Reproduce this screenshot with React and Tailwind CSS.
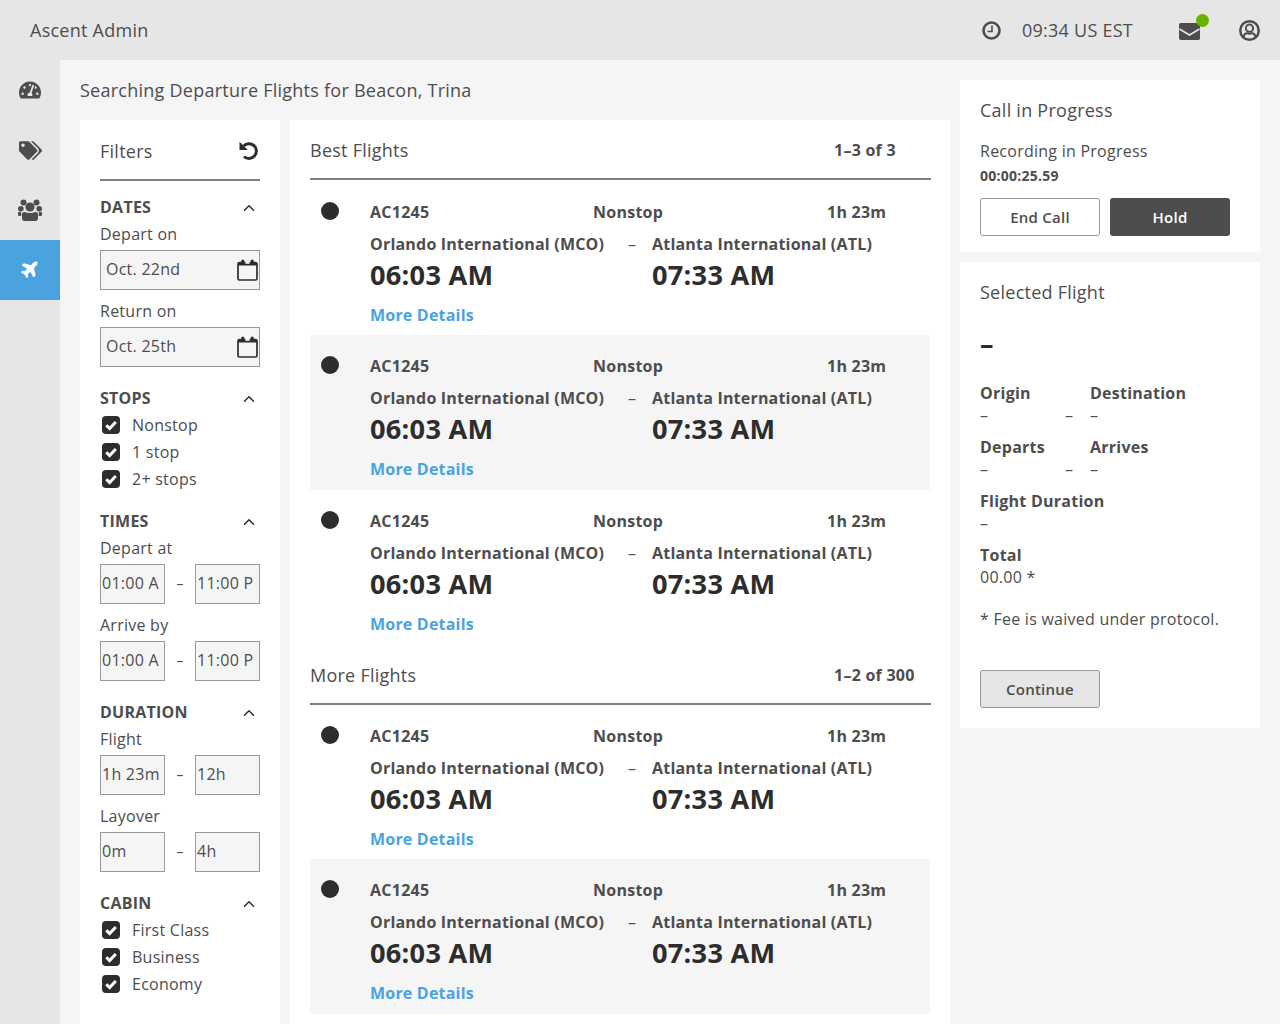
import React from "react";
import { FaTachometerAlt, FaTags, FaPlane } from "react-icons/fa";
import { FiChevronUp } from "react-icons/fi";

function SectionHead({ children }) {
  return (
    <div className="flex h-[27px] items-center justify-between">
      <span className="text-base font-bold">{children}</span>
      <FiChevronUp className="mr-[2px] mt-[2px] text-[18px] text-[#2d2d2d]" />
    </div>
  );
}
function Label({ children }) {
  return <div className="flex h-[27px] items-center text-base">{children}</div>;
}
function Box({ children, className = "" }) {
  return (
    <div className={`flex h-10 items-center overflow-hidden border border-[#999999] bg-[#f5f5f5] pb-[2px] text-base ${className}`}>
      {children}
    </div>
  );
}
function CalendarIcon() {
  return (
    <svg width="21" height="22" viewBox="0 0 21 22" className="mt-[1px] text-[#2d2d2d]">
      <rect x="1" y="3.5" width="19" height="17.5" rx="1.5" fill="none" stroke="currentColor" strokeWidth="1.7" />
      <rect x="1" y="3.5" width="19" height="3" fill="currentColor" />
      <rect x="4.2" y="0.5" width="3.2" height="5.5" rx="1.6" fill="currentColor" />
      <rect x="13.6" y="0.5" width="3.2" height="5.5" rx="1.6" fill="currentColor" />
      <rect x="8.4" y="2" width="4.2" height="2.8" fill="#f5f5f5" />
    </svg>
  );
}
function DateInput({ value }) {
  return (
    <Box className="mt-[3px] justify-between pl-[5px] pr-[1.5px]">
      <span>{value}</span>
      <CalendarIcon />
    </Box>
  );
}
function RangeInput({ a, b }) {
  return (
    <div className="mt-[3px] flex items-center">
      <Box className="w-[65px] whitespace-nowrap pl-[1px]">{a}</Box>
      <span className="w-[30px] text-center text-sm">–</span>
      <Box className="w-[65px] whitespace-nowrap pl-[1px]">{b}</Box>
    </div>
  );
}
function Check({ children }) {
  return (
    <div className="flex h-[27px] items-center text-base">
      <svg width="18" height="18" viewBox="0 0 18 18" className="ml-[2px] mr-[12px]">
        <rect width="18" height="18" rx="4" fill="#2d2d2d" />
        <path d="M4.3 9.2 L7.6 12.5 L13.8 6" fill="none" stroke="#fff" strokeWidth="3" />
      </svg>
      {children}
    </div>
  );
}
function FlightRow({ shaded, first }) {
  return (
    <div className={`flex pt-[17px] ${first ? "h-[154px]" : "h-[155px]"} ${shaded ? "bg-[#f5f5f5]" : ""}`}>
      <div className="w-[60px] pl-[11px] pt-[4px]">
        <div className="h-[18px] w-[18px] rounded-full bg-[#2d2d2d]" />
      </div>
      <div className="flex-1">
        <div className="flex h-[27px] items-center text-base font-bold">
          <span className="w-[223px]">AC1245</span>
          <span className="w-[234px]">Nonstop</span>
          <span>1h 23m</span>
        </div>
        <div className="mt-[5px] flex h-[27px] items-center text-base font-bold tracking-[0.2px]">
          <span className="w-[258px]">Orlando International (MCO)</span>
          <span className="w-[24px] font-normal">–</span>
          <span>Atlanta International (ATL)</span>
        </div>
        <div className="flex h-[36px] items-center text-[27.2px] font-bold text-[#2d2d2d]">
          <span className="w-[282px]">06:03 AM</span>
          <span>07:33 AM</span>
        </div>
        <div className="mt-[8px] flex h-[27px] items-center text-base font-bold tracking-[0.2px] text-[#4aa3df]">More Details</div>
      </div>
    </div>
  );
}
function ListHead({ title, count, className = "" }) {
  return (
    <div className={`-mx-[0.5px] flex h-[60px] items-center justify-between border-b-2 border-[#808080] pl-[0.5px] pt-[2px] ${className}`}>
      <span className="text-lg">{title}</span>
      <span className="w-[96.5px] text-base font-bold">{count}</span>
    </div>
  );
}
function Pair({ a, b, av = "–", bv = "–" }) {
  return (
    <div className="mt-[10px]">
      <div className="flex h-[22px] items-center text-base font-bold">
        <span className="w-[110px]">{a}</span>
        <span>{b}</span>
      </div>
      <div className="flex h-[22px] items-center text-base">
        <span className="w-[85px]">{av}</span>
        <span className="w-[25px]">–</span>
        <span>{bv}</span>
      </div>
    </div>
  );
}
function Single({ a, v }) {
  return (
    <div className="mt-[10px]">
      <div className="flex h-[22px] items-center text-base font-bold">{a}</div>
      <div className="flex h-[22px] items-center text-base">{v}</div>
    </div>
  );
}
function UsersIcon() {
  return (
    <svg width="24" height="22" viewBox="0 0 24 22" fill="currentColor">
      <circle cx="5.5" cy="3.5" r="3" />
      <circle cx="18.5" cy="3.5" r="3" />
      <circle cx="2.8" cy="9.8" r="2.8" />
      <circle cx="21.2" cy="9.8" r="2.8" />
      <circle cx="12" cy="8" r="4.6" />
      <path d="M4 15 C4 13.5 5.5 13 7 13 C9 14.3 15 14.3 17 13 C18.5 13 20 13.5 20 15 L20 19.5 C20 21 19 22 17.5 22 L6.5 22 C5 22 4 21 4 19.5 Z" />
      <path d="M0 13.5 C1 12.8 2.5 13 3.2 13.5 L3.2 17 L1.5 17 C0.6 17 0 16.5 0 15.5 Z" />
      <path d="M24 13.5 C23 12.8 21.5 13 20.8 13.5 L20.8 17 L22.5 17 C23.4 17 24 16.5 24 15.5 Z" />
    </svg>
  );
}
function ClockIcon() {
  return (
    <svg width="19" height="19" viewBox="0 0 19 19" fill="none" stroke="currentColor">
      <circle cx="9.5" cy="9.5" r="8" strokeWidth="2.6" />
      <path d="M10 4.5 V10.5 H5.5" strokeWidth="1.6" />
    </svg>
  );
}
function MailIcon() {
  return (
    <svg width="21" height="17" viewBox="0 0 21 17">
      <rect width="21" height="17" rx="1.8" fill="currentColor" />
      <path d="M0.5 6 L10.5 12 L20.5 6" fill="none" stroke="#e6e6e6" strokeWidth="1.6" />
    </svg>
  );
}
function UserIcon() {
  return (
    <svg width="21" height="21" viewBox="0 0 21 21" fill="none" stroke="currentColor">
      <circle cx="10.5" cy="10.5" r="9.25" strokeWidth="2.5" />
      <circle cx="10.5" cy="8.2" r="3.6" strokeWidth="2" />
      <path d="M4.6 17.3 C4.8 14.6 6.4 13.2 8.4 13.2 C9.6 13.8 11.4 13.8 12.6 13.2 C14.6 13.2 16.2 14.6 16.4 17.3" strokeWidth="2" />
    </svg>
  );
}
function UndoIcon() {
  return (
    <svg width="19" height="19" viewBox="0 0 19 19" className="mr-[2px] text-[#2d2d2d]">
      <path d="M4.6 5 A7.4 7.4 0 1 1 5 15.5" fill="none" stroke="currentColor" strokeWidth="3" />
      <path d="M0.5 0.8 V9 H8.7 Z" fill="currentColor" />
    </svg>
  );
}

export default function App() {
  return (
    <div className="flex h-screen flex-col overflow-hidden bg-[#e6e6e6] font-['Open_Sans',sans-serif] tracking-[0.25px] text-[#4d4d4d]">
      <header className="flex h-[60px] shrink-0 items-center pl-[30px] pr-[20px]">
        <span className="flex-1 text-lg">Ascent Admin</span>
        <ClockIcon />
        <span className="ml-[21px] w-[157px] text-lg">09:34 US EST</span>
        <div className="relative mt-[3px] flex">
          <MailIcon />
          <span className="absolute -right-[9px] -top-[9px] h-[13px] w-[13px] rounded-full bg-[#66b300]" />
        </div>
        <div className="ml-[39px] flex"><UserIcon /></div>
      </header>
      <div className="flex min-h-0 flex-1">
        <nav className="w-[60px] shrink-0 text-[22px]">
          <div className="flex h-[60px] items-center justify-center"><FaTachometerAlt /></div>
          <div className="flex h-[60px] items-center justify-center"><FaTags className="text-[23px]" /></div>
          <div className="flex h-[60px] items-center justify-center"><UsersIcon /></div>
          <div className="flex h-[60px] items-center justify-center bg-[#4aa3df] pb-[3px] text-white"><FaPlane className="text-[19px] -rotate-45" /></div>
        </nav>
        <main className="flex min-w-0 flex-1 gap-[10px] bg-[#f5f5f5] pl-[20px] pr-[20px] pt-[20px]">
          <div className="w-[870px] shrink-0">
            <h1 className="flex h-[20px] items-center whitespace-nowrap text-lg">Searching Departure Flights for Beacon, Trina</h1>
            <div className="mt-[20px] flex items-start gap-[10px]">
              <section className="w-[200px] shrink-0 bg-white px-[20px] pb-[40px]">
                <div className="flex h-[61px] items-center justify-between border-b-2 border-[#808080] pt-[2px]">
                  <span className="text-lg">Filters</span>
                  <UndoIcon />
                </div>
                <div className="pt-[12px]">
                  <SectionHead>DATES</SectionHead>
                  <Label>Depart on</Label>
                  <DateInput value="Oct. 22nd" />
                  <div className="mt-[7px]"><Label>Return on</Label></div>
                  <DateInput value="Oct. 25th" />
                </div>
                <div className="mt-[17px]">
                  <SectionHead>STOPS</SectionHead>
                  <Check>Nonstop</Check>
                  <Check>1 stop</Check>
                  <Check>2+ stops</Check>
                </div>
                <div className="mt-[15px]">
                  <SectionHead>TIMES</SectionHead>
                  <Label>Depart at</Label>
                  <RangeInput a="01:00 A" b="11:00 P" />
                  <div className="mt-[7px]"><Label>Arrive by</Label></div>
                  <RangeInput a="01:00 A" b="11:00 P" />
                </div>
                <div className="mt-[17px]">
                  <SectionHead>DURATION</SectionHead>
                  <Label>Flight</Label>
                  <RangeInput a="1h 23m" b="12h" />
                  <div className="mt-[7px]"><Label>Layover</Label></div>
                  <RangeInput a="0m" b="4h" />
                </div>
                <div className="mt-[17px]">
                  <SectionHead>CABIN</SectionHead>
                  <Check>First Class</Check>
                  <Check>Business</Check>
                  <Check>Economy</Check>
                </div>
              </section>
              <section className="w-[660px] shrink-0 bg-white px-[20px] pb-[40px]">
                <ListHead title="Best Flights" count="1–3 of 3" className="mb-[1px]" />
                <FlightRow first />
                <FlightRow shaded />
                <FlightRow />
                <ListHead title="More Flights" count="1–2 of 300" />
                <FlightRow first />
                <FlightRow shaded />
              </section>
            </div>
          </div>
          <aside className="w-[300px] shrink-0">
            <div className="h-[172px] bg-white px-[20px] pt-[15px]">
              <div className="flex h-[30px] items-center text-lg">Call in Progress</div>
              <div className="mt-[12px] flex h-[27px] items-center text-base">Recording in Progress</div>
              <div className="mt-[1px] flex h-[22px] items-center text-sm font-bold">00:00:25.59</div>
              <div className="mt-[11px] flex gap-[10px]">
                <button className="h-[38px] w-[120px] rounded-[3px] border border-[#999999] bg-white text-[15px] font-semibold">End Call</button>
                <button className="h-[38px] w-[120px] rounded-[3px] bg-[#4d4d4d] text-[15px] font-semibold text-white">Hold</button>
              </div>
            </div>
            <div className="mt-[10px] h-[466px] bg-white px-[20px] pt-[15px]">
              <div className="flex h-[30px] items-center text-lg">Selected Flight</div>
              <div className="mt-[19px] flex h-[36px] items-center text-[27px] font-bold text-[#2d2d2d]">–</div>
              <div className="h-[10px]" />
              <Pair a="Origin" b="Destination" />
              <Pair a="Departs" b="Arrives" />
              <Single a="Flight Duration" v="–" />
              <Single a="Total" v="00.00 *" />
              <div className="mt-[20px] flex h-[22px] items-center whitespace-nowrap text-base">* Fee is waived under protocol.</div>
              <button className="mt-[40px] h-[38px] w-[120px] rounded-[3px] border border-[#999999] bg-[#e6e6e6] text-[15px] font-semibold">Continue</button>
            </div>
          </aside>
        </main>
      </div>
    </div>
  );
}
